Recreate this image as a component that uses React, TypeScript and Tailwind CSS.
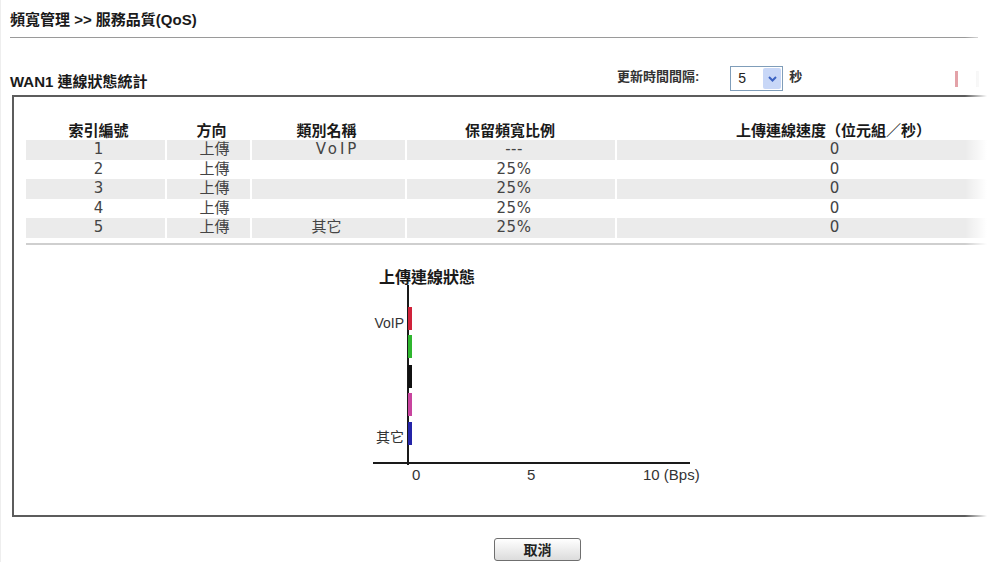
const rows = [
  { idx: "1", dir: "上傳", name: "VoIP", pct: "---", speed: "0" },
  { idx: "2", dir: "上傳", name: "", pct: "25%", speed: "0" },
  { idx: "3", dir: "上傳", name: "", pct: "25%", speed: "0" },
  { idx: "4", dir: "上傳", name: "", pct: "25%", speed: "0" },
  { idx: "5", dir: "上傳", name: "其它", pct: "25%", speed: "0" },
];

const bars = [
  { y: 45, color: "#d0223a" },
  { y: 73, color: "#2fb62f" },
  { y: 103, color: "#111111" },
  { y: 131, color: "#c8449e" },
  { y: 160, color: "#2424a8" },
];

function Chart() {
  return (
    <svg width="350" height="225" viewBox="0 0 350 225" className="ml-[346px] mt-[17.5px] block">
      <text x="19" y="21" fontSize="16" fontWeight="700" fill="#1a1a1a" fontFamily="'Noto Sans CJK TC', sans-serif">
        上傳連線狀態
      </text>
      <line x1="48" y1="23" x2="48" y2="203" stroke="#1a1a1a" strokeWidth="2" />
      <line x1="13" y1="201" x2="330" y2="201" stroke="#1a1a1a" strokeWidth="2" />
      {bars.map((b) => (
        <rect key={b.y} x="48" y={b.y} width="4" height="23" fill={b.color} />
      ))}
      <text x="44" y="66" textAnchor="end" fontSize="14" fill="#333" fontFamily="'Liberation Sans', sans-serif">
        VoIP
      </text>
      <text x="44" y="180" textAnchor="end" fontSize="14" fill="#333" fontFamily="'Noto Sans CJK TC', sans-serif">
        其它
      </text>
      <g fontSize="15" fill="#333" fontFamily="'Liberation Sans', sans-serif">
        <text x="52" y="218">0</text>
        <text x="167" y="218">5</text>
        <text x="283" y="218">10 (Bps)</text>
      </g>
    </svg>
  );
}

export default function App() {
  return (
    <div className="relative h-[562px] w-[987px] overflow-hidden border-l border-[#eeeeee] bg-white text-[#1a1a1a] font-['Liberation_Sans','Noto_Sans_CJK_TC',sans-serif]">
      <div className="h-[37px] pl-[9px] pt-[11px] text-[15px] font-bold leading-[18px]">頻寬管理 &gt;&gt; 服務品質(QoS)</div>
      <div className="ml-[9px] w-[968px] border-t border-[#9a9a9a]" />

      <div className="mt-[28px] flex h-[25px] items-center">
        <div className="mt-[6px] w-[616px] pl-[9px] text-[15px] font-bold leading-[18px]">WAN1 連線狀態統計</div>
        <span className="mb-[4px] text-[13px] font-bold text-[#333]">更新時間間隔:</span>
        <div className="ml-[31px] flex h-[25px] w-[53px] items-center border border-[#7f9db9] bg-white">
          <span className="flex-1 pl-[7px] text-[14px] text-[#222]">5</span>
          <span className="mr-px flex h-[21px] w-[18px] items-center justify-center rounded-[2px] bg-[#c8d7f7]">
            <svg width="9" height="6" viewBox="0 0 9 6">
              <path d="M1 1l3.5 3.5L8 1" fill="none" stroke="#3c63c2" strokeWidth="2" />
            </svg>
          </span>
        </div>
        <span className="mb-[4px] ml-[6px] text-[13px] font-bold text-[#333]">秒</span>
        <span className="ml-[153px] h-[16px] w-[3px] bg-[#e3a2a8]" />
        <span className="ml-[18px] h-[16px] w-[3px] bg-[#eeeeee]" />
      </div>

      <div className="ml-[11px] mt-[4px] h-[422px] w-[1060px] border-2 border-[#5c5c5c]">
        <div className="ml-[12px] mt-[23px] w-[1026px] font-['DejaVu_Sans','Noto_Sans_CJK_TC',sans-serif]">
          <div className="grid h-[20px] grid-cols-[139px_85px_155px_210px_437px] items-center text-center text-[15px] font-bold leading-[20px] text-[#1a1a1a] font-['Noto_Sans_CJK_TC',sans-serif]">
            <div className="pl-[6px]">索引編號</div>
            <div className="pl-[8px]">方向</div>
            <div className="pr-[2px]">類別名稱</div>
            <div>保留頻寬比例</div>
            <div>上傳連線速度（位元組／秒）</div>
          </div>
          {rows.map((r, i) => {
            const bg = i % 2 === 0 ? "bg-[#ebebeb]" : "bg-white";
            return (
              <div
                key={r.idx}
                className="grid h-[19.5px] grid-cols-[139px_85px_155px_210px_437px] text-center text-[15px] leading-[19.5px] text-[#444]"
              >
                <div className={`${bg} pl-[6px]`}>{r.idx}</div>
                <div className={`${bg} border-l-2 border-white pl-[12px]`}>{r.dir}</div>
                <div className={`${bg} border-l-2 border-white ${r.name === "VoIP" ? "pl-[18px] tracking-[3px]" : "pr-[4px]"}`}>
                  {r.name}
                </div>
                <div className={`${bg} border-l-2 border-white pl-[6px] tracking-[0.5px]`}>{r.pct}</div>
                <div className={`${bg} border-l-2 border-white`}>{r.speed}</div>
              </div>
            );
          })}
        </div>
        <div className="ml-[12px] mt-[5px] w-[1026px] border-t-2 border-[#cfcfcf]" />
        <Chart />
      </div>

      <button className="ml-[493px] mt-[21px] flex h-[23px] w-[87px] items-center justify-center rounded-[3px] border border-[#6f6f6f] bg-gradient-to-b from-white to-[#dcdcdc] text-[14px] font-bold text-[#222] font-['Noto_Sans_CJK_TC',sans-serif]">
        取消
      </button>

      <div className="pointer-events-none absolute right-0 top-[30px] h-[495px] w-[22px] bg-gradient-to-r from-transparent to-white" />
    </div>
  );
}
